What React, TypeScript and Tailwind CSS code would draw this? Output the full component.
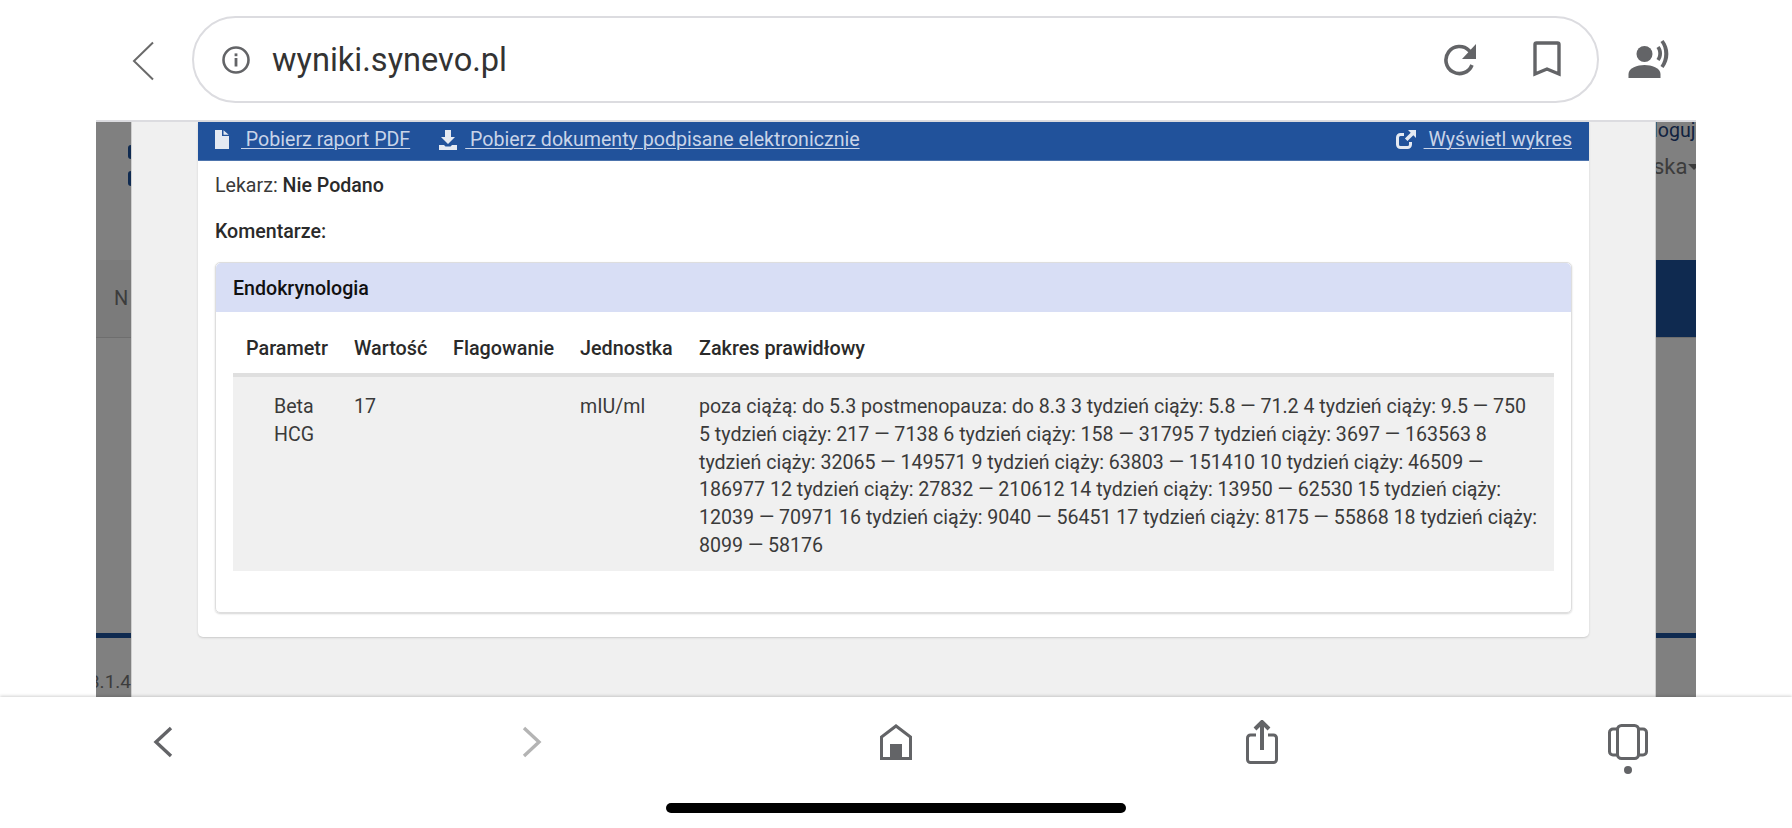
import React from "react";

const ICON = "#636467";

function InfoIcon() {
  return (
    <svg width="30" height="30" viewBox="0 0 30 30" fill="none">
      <circle cx="15" cy="15" r="12.5" stroke={ICON} strokeWidth="2.6" />
      <rect x="13.6" y="13" width="2.8" height="8.5" fill={ICON} />
      <rect x="13.6" y="8.4" width="2.8" height="2.8" fill={ICON} />
    </svg>
  );
}

function ReloadIcon() {
  return (
    <svg width="34" height="36" viewBox="0 0 34 36" fill="none">
      <path d="M28 23a13.5 13.5 0 1 1-3-14.5l3 3" stroke={ICON} strokeWidth="3.6" />
      <path d="M32 2v15H18z" fill={ICON} />
    </svg>
  );
}

function BookmarkIcon() {
  return (
    <svg width="30" height="38" viewBox="0 0 30 38" fill="none">
      <path d="M3 3.500a1.500 1.500 0 0 1 1.500-1.500h21a1.500 1.500 0 0 1 1.500 1.500V33l-12-5-12 5z" stroke={ICON} strokeWidth="3.4" />
    </svg>
  );
}

function ListenIcon() {
  return (
    <svg width="44" height="38" viewBox="0 0 41 38" fill={ICON}>
      <circle cx="17" cy="14" r="8" />
      <path d="M1 38v-4c0-6 9-9 16-9s16 3 16 9v4z" />
      <path d="M29 8c2.400 3 2.400 8 0 11l3 2c3.400-4.500 3.400-10.500 0-15z" />
      <path d="M36 0l-3 2c5 6 5 17 0 24l3 2c6.500-8.500 6.500-19.500 0-28z" />
    </svg>
  );
}

function FileIcon() {
  return (
    <svg width="14" height="19" viewBox="0 0 14 19" fill="#e4e9f2">
      <path d="M0 0h7v6h7v13H0z" />
      <path d="M8.500 0.300L13.700 4.700H8.500z" />
    </svg>
  );
}

function DownloadIcon() {
  return (
    <svg width="18" height="20" viewBox="0 0 18 20" fill="#e4e9f2">
      <path d="M6 0h6v7h4l-7 7-7-7h4z" />
      <path d="M0 15h5l1.500 1.500h5L13 15h5v5H0z" />
    </svg>
  );
}

function ShareIcon() {
  return (
    <svg width="20" height="20" viewBox="0 0 20 20" fill="none">
      <path d="M8 4.500H4.500A3 3 0 0 0 1.500 7.500v7a3 3 0 0 0 3 3h7a3 3 0 0 0 3-3V12" stroke="#e4e9f2" strokeWidth="3" />
      <path d="M12 0h8v8l-2.700-2.700-5.800 5.800-2.600-2.600 5.800-5.800z" fill="#e4e9f2" />
    </svg>
  );
}

function ChevronBack() {
  return (
    <svg width="23" height="40" viewBox="0 0 23 40" fill="none">
      <path d="M21 1.500L2 20l19 18.500" stroke="#6a6a6a" strokeWidth="2" />
    </svg>
  );
}

function Chevron({ dir, color }: { dir: "left" | "right"; color: string }) {
  return (
    <svg width="20" height="32" viewBox="0 0 20 32" fill="none">
      <path d={dir === "left" ? "M18 2L3 16l15 14" : "M2 2l15 14L2 30"} stroke={color} strokeWidth="3.4" />
    </svg>
  );
}

function HomeIcon() {
  return (
    <svg width="32" height="36" viewBox="0 0 32 36" fill="none">
      <path d="M1.500 34.500V13L16 2l14.500 11v21.500z" stroke={ICON} strokeWidth="3" />
      <rect x="10" y="20" width="12" height="14" fill={ICON} />
    </svg>
  );
}

function ShareOutIcon() {
  return (
    <svg width="32" height="44" viewBox="0 0 32 44" fill="none">
      <path d="M10 15H4.500a3 3 0 0 0-3 3v21.500a3 3 0 0 0 3 3h23a3 3 0 0 0 3-3V18a3 3 0 0 0-3-3H22" stroke={ICON} strokeWidth="3" />
      <path d="M16 30V2M9 9l7-7 7 7" stroke={ICON} strokeWidth="4" />
    </svg>
  );
}

function TabsIcon() {
  return (
    <svg width="40" height="52" viewBox="0 0 40 52" fill="none">
      <rect x="9.500" y="1.500" width="21" height="33" rx="4" stroke={ICON} strokeWidth="3" />
      <path d="M9 5H5a3.500 3.500 0 0 0-3.500 3.500v19A3.500 3.500 0 0 0 5 31h4M31 5h4a3.500 3.500 0 0 1 3.500 3.500v19A3.500 3.500 0 0 1 35 31h-4" stroke={ICON} strokeWidth="3" />
      <circle cx="20" cy="46" r="4" fill={ICON} />
    </svg>
  );
}

const RANGE =
  "poza ciążą: do 5.3 postmenopauza: do 8.3 3 tydzień ciąży: 5.8 — 71.2 4 tydzień ciąży: 9.5 — 750 5 tydzień ciąży: 217 — 7138 6 tydzień ciąży: 158 — 31795 7 tydzień ciąży: 3697 — 163563 8 tydzień ciąży: 32065 — 149571 9 tydzień ciąży: 63803 — 151410 10 tydzień ciąży: 46509 — 186977 12 tydzień ciąży: 27832 — 210612 14 tydzień ciąży: 13950 — 62530 15 tydzień ciąży: 12039 — 70971 16 tydzień ciąży: 9040 — 56451 17 tydzień ciąży: 8175 — 55868 18 tydzień ciąży: 8099 — 58176";

const HEAD = ["Parametr", "Wartość", "Flagowanie", "Jednostka", "Zakres prawidłowy"];

export default function App() {
  return (
    <div className="flex h-[828px] w-[1792px] flex-col overflow-hidden bg-white font-['Roboto',sans-serif] text-[19.6px] leading-[27.9px] text-[#3a3a3a]">
      <header className="flex h-[120px] shrink-0 items-start bg-white pl-[132px] pt-[16px]">
        <div className="mt-[25px] mr-[37px] shrink-0"><ChevronBack /></div>
        <div className="flex h-[87px] w-[1407px] items-center rounded-full border-2 border-[#dcdce0] pl-[27px] pr-[35px]">
          <InfoIcon />
          <span className="ml-[21px] pt-[2px] text-[32.6px] leading-none text-[#333]">wyniki.synevo.pl</span>
          <div className="ml-auto flex items-center gap-[54px]">
            <ReloadIcon />
            <BookmarkIcon />
          </div>
        </div>
        <div className="ml-[27px] mt-[24px]"><ListenIcon /></div>
      </header>

      <main className="mx-[96px] flex h-[577px] shrink-0 border-t-2 border-[#dcdce0]">
        <div className="flex w-[35px] shrink-0 flex-col overflow-hidden bg-[#808080] text-[#3c3c3c]">
          <div className="flex h-[138px] shrink-0 flex-col items-end gap-[12px] pt-[23px]">
            <span className="h-[14px] w-[3px] rounded-l-full bg-[#0f2a50]" />
            <span className="h-[15px] w-[3px] rounded-l-full bg-[#0f2a50]" />
          </div>
          <div className="flex h-[78px] shrink-0 items-center justify-end overflow-hidden border-b border-[#6e6e6e] bg-[#7b7b7b] text-[20px]">
            <span className="w-[17px] shrink-0">N</span>
          </div>
          <div className="mt-[295px] h-[5px] shrink-0 bg-[#0f2a50]" />
          <div className="mt-[32px] flex justify-end overflow-hidden whitespace-nowrap text-[19px] leading-[24px]">3.1.4</div>
        </div>

        <div className="flex min-w-0 flex-1 flex-col border-x border-[#cfcfcf] bg-[#f0f0f0] px-[66px]">
          <section className="h-[515px] rounded-b-[5px] bg-white shadow-[0_1px_2px_#c9c9c9]">
            <div className="flex h-[39px] items-center justify-between border-b border-[#4d74ad] bg-[#21529b] pb-[3px] pl-[17px] pr-[17px] text-[#c9d4e8]">
              <div className="flex items-center">
                <a className="flex items-center gap-[12px]"><FileIcon /><span className="underline decoration-1 underline-offset-2">&nbsp;Pobierz raport PDF</span></a>
                <a className="ml-[29px] flex items-center gap-[8px]"><DownloadIcon /><span className="underline decoration-1 underline-offset-2">&nbsp;Pobierz dokumenty podpisane elektronicznie</span></a>
              </div>
              <a className="flex items-center gap-[8px]"><ShareIcon /><span className="underline decoration-1 underline-offset-2">&nbsp;Wyświetl wykres</span></a>
            </div>
            <div className="px-[17px]">
              <p className="mt-[11px]">Lekarz: <b className="font-medium text-[#2a2a2a]">Nie Podano</b></p>
              <p className="mt-[18px] font-medium text-[#2a2a2a]">Komentarze:</p>
              <div className="mt-[16px] h-[351px] rounded-[5px] border border-[#dedede] shadow-[0_1px_2px_#d5d5d5]">
                <h2 className="flex h-[49px] items-center rounded-t-[5px] bg-[#d8def5] px-[17px] pt-[3px] font-medium text-[#111]">Endokrynologia</h2>
                <div className="px-[17px] pt-[13px]">
                  <table className="w-full table-fixed border-collapse">
                    <colgroup>
                      <col className="w-[108px]" />
                      <col className="w-[99px]" />
                      <col className="w-[127px]" />
                      <col className="w-[119px]" />
                      <col />
                    </colgroup>
                    <thead>
                      <tr className="border-b-4 border-[#dfdfdf]">
                        {HEAD.map((h) => (
                          <th key={h} className="whitespace-nowrap px-[13px] pb-[10px] pt-[10px] text-left text-[19.8px] font-medium text-[#2a2a2a]">{h}</th>
                        ))}
                      </tr>
                    </thead>
                    <tbody>
                      <tr className="bg-[#f0f0f0] align-top">
                        <td className="pb-[11px] pl-[41px] pr-[13px] pt-[16px]">Beta HCG</td>
                        <td className="px-[13px] pb-[11px] pt-[16px]">17</td>
                        <td className="px-[13px] pb-[11px] pt-[16px]" />
                        <td className="px-[13px] pb-[11px] pt-[16px]">mIU/ml</td>
                        <td className="px-[13px] pb-[11px] pt-[16px]">{RANGE}</td>
                      </tr>
                    </tbody>
                  </table>
                </div>
              </div>
            </div>
          </section>
        </div>

        <div className="flex w-[40px] shrink-0 flex-col overflow-hidden bg-[#808080] text-[#3c3c3c]">
          <div className="flex h-[138px] shrink-0 flex-col overflow-hidden whitespace-nowrap">
            <span className="-mt-[5px] -ml-[3px] block text-[#10223f]">loguj</span>
            <span className="mt-[8px] -ml-[3px] flex items-center text-[22px]">ska<i className="ml-[1px] h-0 w-0 border-x-[6px] border-t-[6px] border-x-transparent border-t-[#3c3c3c]" /></span>
          </div>
          <div className="h-[78px] shrink-0 border-b border-[#6e6e6e] bg-[#0f2a50]" />
          <div className="mt-[295px] h-[5px] shrink-0 bg-[#0f2a50]" />
        </div>
      </main>

      <footer className="relative flex flex-1 flex-col bg-white shadow-[0_-1px_3px_rgba(0,0,0,0.18)]">
        <div className="flex h-[106px] shrink-0 items-start">
          <div className="ml-[153px] mt-[29px]"><Chevron dir="left" color="#636467" /></div>
          <div className="ml-[349px] mt-[29px]"><Chevron dir="right" color="#b4b4b4" /></div>
          <div className="ml-[338px] mt-[27px]"><HomeIcon /></div>
          <div className="ml-[334px] mt-[23px]"><ShareOutIcon /></div>
          <div className="ml-[330px] mt-[27px]"><TabsIcon /></div>
        </div>
        <div className="mx-auto h-[10px] w-[460px] rounded-full bg-black" />
      </footer>
    </div>
  );
}
